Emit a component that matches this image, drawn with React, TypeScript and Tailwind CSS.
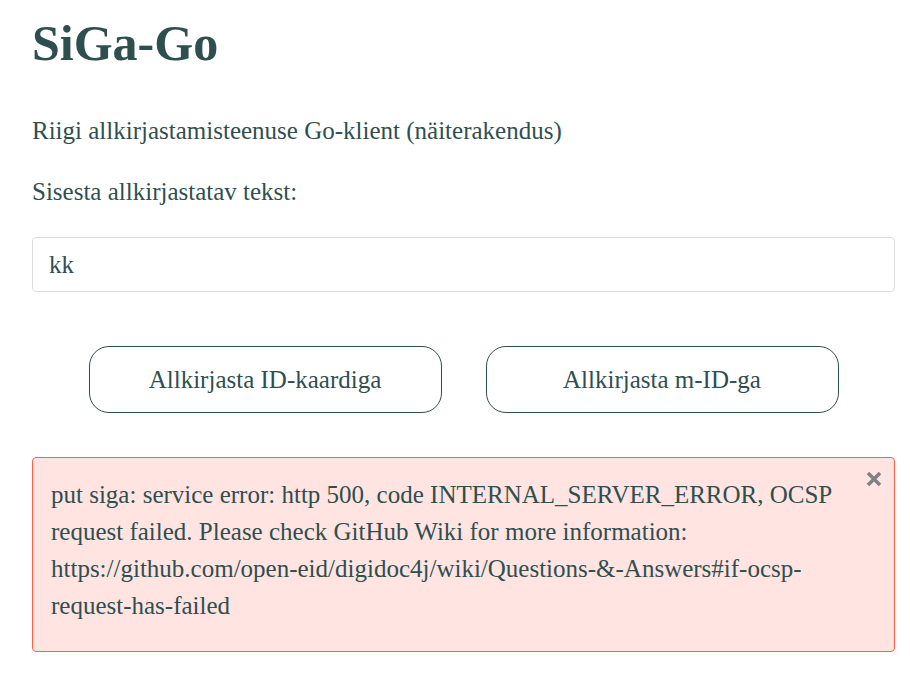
export default function App() {
  return (
    <div
      className="min-h-screen bg-white text-[#2f4f4f]"
      style={{ fontFamily: '"Liberation Serif", "Times New Roman", serif' }}
    >
      <div className="ml-8 w-[863px] pt-[13px]">
        <h1 className="text-[50px] font-bold leading-[60px]">SiGa-Go</h1>

        <p className="mt-[43px] text-[25px] leading-[30px]">
          Riigi allkirjastamisteenuse Go-klient (näiterakendus)
        </p>

        <p className="mt-[31px] text-[25px] leading-[30px]">Sisesta allkirjastatav tekst:</p>

        <input
          type="text"
          defaultValue="kk"
          className="mt-[30px] block h-[55px] w-full rounded border border-[#dddddd] px-4 text-[25px] text-[#2f4f4f] outline-none"
          style={{ fontFamily: '"Liberation Serif", "Times New Roman", serif' }}
        />

        <div className="mt-[54px] flex justify-center gap-[44px]">
          <button className="h-[67px] w-[353px] rounded-[20px] border border-[#2f4f4f] bg-white text-[25px]">
            Allkirjasta ID-kaardiga
          </button>
          <button className="h-[67px] w-[353px] rounded-[20px] border border-[#2f4f4f] bg-white text-[25px]">
            Allkirjasta m-ID-ga
          </button>
        </div>

        <div className="relative mt-[44px] rounded border border-[#ff6347] bg-[#ffe4e1] pt-[18px] pb-[27px] pl-[18px] pr-[50px] text-[25px] leading-[37px]">
          <button className="absolute right-[12px] top-[13px] text-[#808080]">
            <svg width="16" height="16" viewBox="0 0 16 16">
              <path d="M2 2 L14 14 M14 2 L2 14" stroke="currentColor" strokeWidth="3.5" />
            </svg>
          </button>
          put siga: service error: http 500, code INTERNAL_SERVER_ERROR, OCSP request failed. Please check GitHub
          Wiki for more information:
          https://github.com/open-eid/digidoc4j/wiki/Questions-&amp;-Answers#if-ocsp-request-has-failed
        </div>
      </div>
    </div>
  );
}
